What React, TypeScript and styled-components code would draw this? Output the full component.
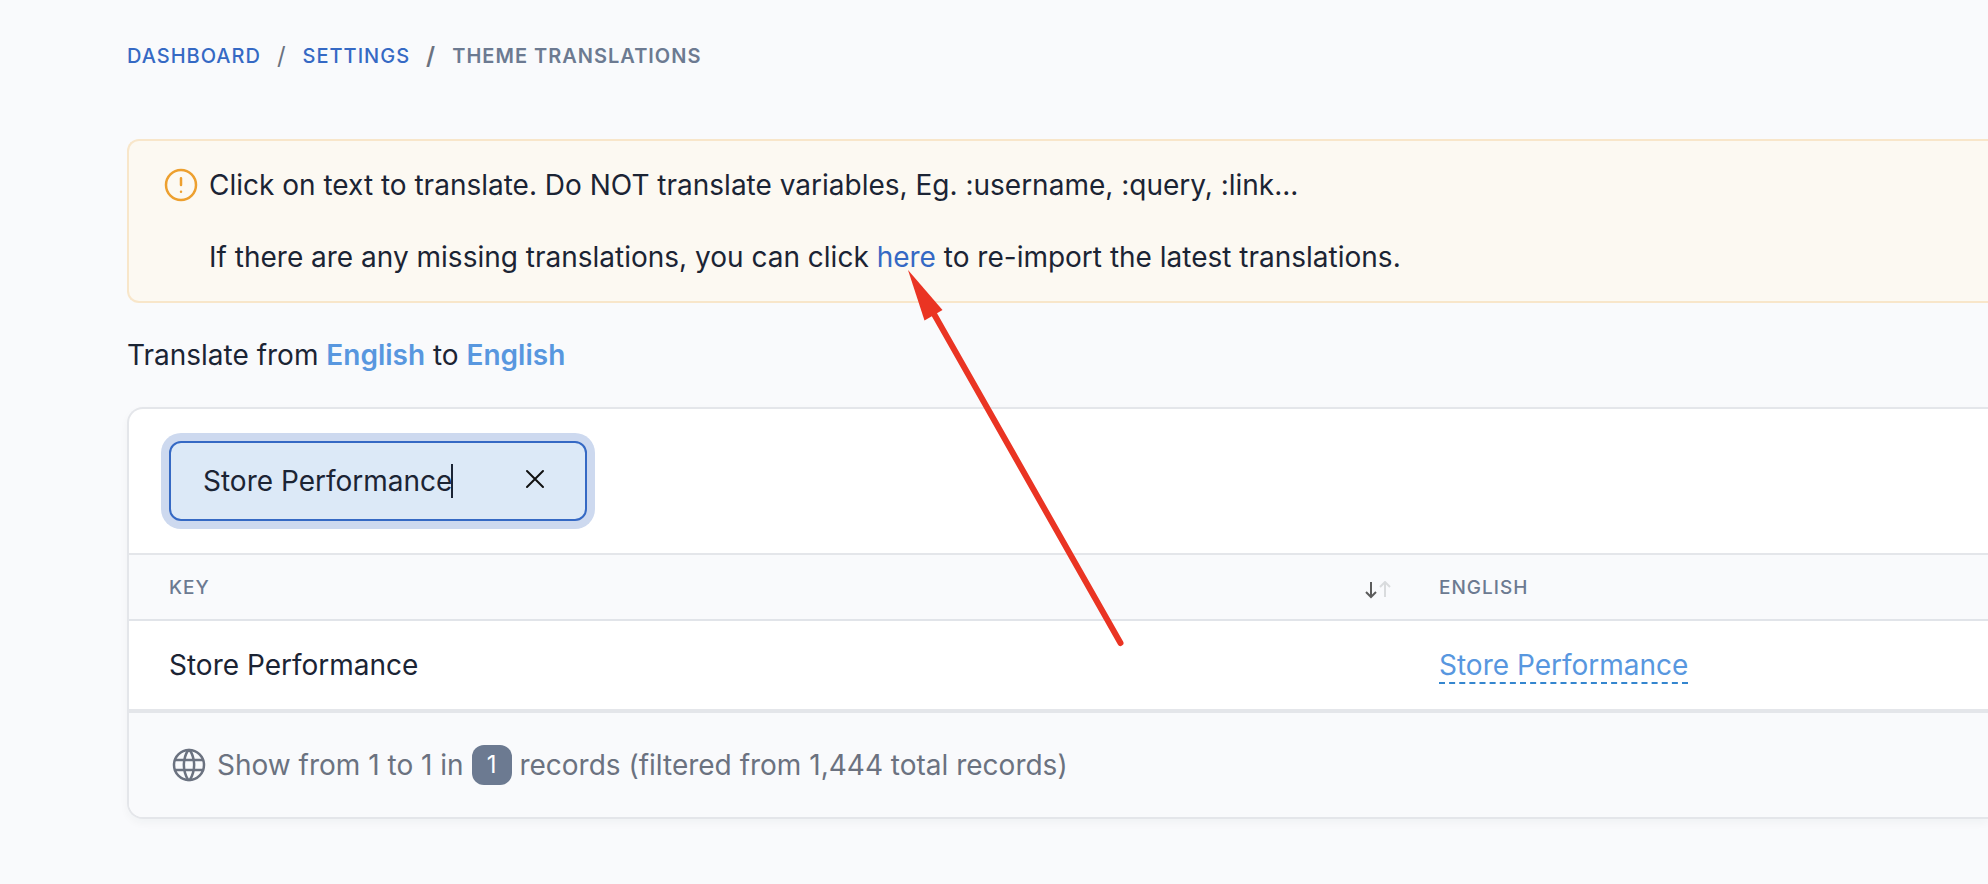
import React, { useState } from "react";
import styled, { createGlobalStyle } from "styled-components";

const colors = {
  page: "#f9fafc",
  text: "#1b2434",
  muted: "#6c7a91",
  gray: "#6b7280",
  link: "#3569c4",
  azure: "#5897df",
  border: "#e4e6ea",
};

const GlobalStyle = createGlobalStyle`
  *, *::before, *::after { box-sizing: border-box; }
  body {
    margin: 0;
    background: ${colors.page};
    color: ${colors.text};
    font-family: Inter, "Liberation Sans", sans-serif;
    font-size: 28px;
    line-height: 40px;
    overflow-x: hidden;
  }
`;

const Page = styled.main`
  position: relative;
  display: flex;
  flex-direction: column;
  gap: 32px;
  padding: 36px 0 64px 127px;
`;

const Breadcrumb = styled.ol`
  display: flex;
  align-items: center;
  margin: 0 0 31px;
  padding: 0;
  list-style: none;
  height: 40px;
  font-size: 20px;
  letter-spacing: 1px;
  text-transform: uppercase;
`;

const Crumb = styled.li<{ $current?: boolean }>`
  display: flex;
  align-items: center;
  color: ${colors.muted};
  font-weight: ${(p) => (p.$current ? 600 : 500)};

  &:not(:first-child)::before {
    content: "/";
    padding: 0 17px 0 16px;
    font-size: 24px;
    font-weight: ${(p) => (p.$current ? 600 : 400)};
    letter-spacing: 0;
    color: ${colors.gray};
  }
`;

const Link = styled.a`
  color: ${colors.link};
  text-decoration: none;
`;

const Alert = styled.section`
  display: flex;
  gap: 8px;
  padding: 24px 32px;
  background: #fcf9f2;
  border: 2px solid #f8e6ca;
  border-right: 0;
  border-radius: 12px 0 0 12px;
`;

const AlertBody = styled.div`
  display: flex;
  flex-direction: column;
  gap: 32px;
`;

const Line = styled.p`
  margin: 0;
`;

const Icon = styled.svg<{ $size: number; $color: string }>`
  display: block;
  flex: none;
  width: ${(p) => p.$size}px;
  height: ${(p) => p.$size}px;
  fill: none;
  stroke: ${(p) => p.$color};
  stroke-width: 1.5;
  stroke-linecap: round;
  stroke-linejoin: round;
`;

const Language = styled.strong`
  color: ${colors.azure};
  font-weight: 600;
`;

const Card = styled.section`
  background: #fff;
  border: 2px solid ${colors.border};
  border-right: 0;
  border-radius: 16px 0 0 16px;
  box-shadow: 0 4px 8px rgba(31, 41, 55, 0.04);
  overflow: hidden;
`;

const Toolbar = styled.div`
  padding: 32px 40px;
  border-bottom: 2px solid ${colors.border};
`;

const SearchBox = styled.label`
  position: relative;
  display: flex;
  align-items: center;
  width: 418px;
  height: 80px;
  padding: 0 34px 0 32px;
  background: #dce9f7;
  border: 2px solid ${colors.link};
  border-radius: 12px;
  box-shadow: 0 0 0 8px #cdd9ef;
`;

const SearchInput = styled.input`
  flex: 1;
  min-width: 0;
  padding: 0;
  border: 0;
  outline: 0;
  background: transparent;
  color: inherit;
  font: inherit;
  caret-color: transparent;
`;

const Caret = styled.span`
  position: absolute;
  top: 21px;
  left: 280px;
  width: 2px;
  height: 34px;
  background: ${colors.text};
`;

const ClearButton = styled.button`
  padding: 0 0 4px;
  border: 0;
  background: transparent;
  cursor: pointer;
`;

const Table = styled.table`
  width: 100%;
  table-layout: fixed;
  border-collapse: separate;
  border-spacing: 0;
`;

const KeyColumn = styled.col``;

const LanguageColumn = styled.col`
  width: 565px;
`;

const HeadCell = styled.th`
  padding: 17px 16px 15px;
  background: ${colors.page};
  border-bottom: 2px solid #e1e4e9;
  color: ${colors.muted};
  font-size: 19px;
  font-weight: 500;
  line-height: 32px;
  letter-spacing: 1px;
  text-align: left;
  text-transform: uppercase;

  &:first-child { padding: 17px 32px 15px 40px; }
`;

const HeadContent = styled.div`
  display: flex;
  align-items: center;
  justify-content: space-between;
`;

const SortButton = styled.button`
  display: flex;
  padding: 4px 0 0;
  border: 0;
  background: transparent;
  cursor: pointer;
`;

const SortIcon = styled.svg`
  display: block;
  width: 26px;
  height: 18px;
  fill: none;
  stroke-width: 2;
`;

const Cell = styled.td`
  padding: 24px 16px;
  border-bottom: 2px solid ${colors.border};

  &:first-child { padding-left: 40px; }
`;

const Editable = styled.a`
  color: ${colors.azure};
  text-decoration: none;
  border-bottom: 2px dashed #3486cf;
`;

const Footer = styled.footer`
  display: flex;
  align-items: center;
  gap: 8px;
  padding: 32px 40px;
  background: ${colors.page};
  border-top: 2px solid ${colors.border};
  color: ${colors.gray};
`;

const Summary = styled.p`
  margin: 0;
`;

const Badge = styled.span`
  display: inline-block;
  min-width: 40px;
  height: 40px;
  border-radius: 12px;
  background: #6c7a91;
  color: #fff;
  font-size: 24px;
  text-align: center;
  vertical-align: top;
`;

const Pointer = styled.svg`
  position: absolute;
  top: 268px;
  left: 904px;
  width: 224px;
  height: 382px;
  pointer-events: none;
`;

export default function App() {
  const [query, setQuery] = useState("Store Performance");

  return (
    <>
      <GlobalStyle />
      <Page>
        <nav aria-label="Breadcrumb">
          <Breadcrumb>
            <Crumb><Link href="#dashboard">Dashboard</Link></Crumb>
            <Crumb><Link href="#settings">Settings</Link></Crumb>
            <Crumb $current aria-current="page">Theme Translations</Crumb>
          </Breadcrumb>
        </nav>

        <Alert>
          <Icon $size={40} $color="#eda02f" viewBox="0 0 24 24" aria-hidden="true">
            <circle cx="12" cy="12" r="9" />
            <path d="M12 8v4M12 16h.01" />
          </Icon>
          <AlertBody>
            <Line>Click on text to translate. Do NOT translate variables, Eg. :username, :query, :link...</Line>
            <Line>
              If there are any missing translations, you can click <Link href="#import">here</Link> to re-import the latest translations.
            </Line>
          </AlertBody>
        </Alert>

        <Line>
          Translate from <Language>English</Language> to <Language>English</Language>
        </Line>

        <Card>
          <Toolbar>
            <SearchBox>
              <SearchInput
                type="text"
                aria-label="Search"
                value={query}
                onChange={(e) => setQuery(e.target.value)}
              />
              {query === "Store Performance" && <Caret />}
              <ClearButton type="button" aria-label="Clear search" onClick={() => setQuery("")}>
                <Icon $size={32} $color="#111111" viewBox="0 0 24 24" aria-hidden="true">
                  <path d="M18 6 6 18M6 6l12 12" />
                </Icon>
              </ClearButton>
            </SearchBox>
          </Toolbar>

          <Table>
            <colgroup>
              <KeyColumn />
              <LanguageColumn />
            </colgroup>
            <thead>
              <tr>
                <HeadCell scope="col">
                  <HeadContent>
                    Key
                    <SortButton type="button" aria-label="Sort by key">
                      <SortIcon viewBox="0 0 26 18" aria-hidden="true">
                        <path stroke="#5c5c5c" d="M6 1v15M1 11l5 5 5-5" />
                        <path stroke="#d9dbdd" d="M20 16V1M15 6l5-5 5 5" />
                      </SortIcon>
                    </SortButton>
                  </HeadContent>
                </HeadCell>
                <HeadCell scope="col">English</HeadCell>
              </tr>
            </thead>
            <tbody>
              <tr>
                <Cell>Store Performance</Cell>
                <Cell><Editable href="#edit">Store Performance</Editable></Cell>
              </tr>
            </tbody>
          </Table>

          <Footer>
            <Icon $size={40} $color={colors.gray} viewBox="0 0 24 24" aria-hidden="true">
              <circle cx="12" cy="12" r="9" />
              <path d="M3.6 9h16.8M3.6 15h16.8M11.5 3a17 17 0 0 0 0 18M12.5 3a17 17 0 0 1 0 18" />
            </Icon>
            <Summary>
              Show from 1 to 1 in <Badge>1</Badge> records (filtered from 1,444 total records)
            </Summary>
          </Footer>
        </Card>

        <Pointer viewBox="904 268 224 382" aria-hidden="true">
          <path d="M934 314 1120.500 643" fill="none" stroke="#ea3423" strokeWidth="6" strokeLinecap="round" />
          <path d="M908 270 942.500 310 924.500 320.500Z" fill="#ea3423" />
        </Pointer>
      </Page>
    </>
  );
}
